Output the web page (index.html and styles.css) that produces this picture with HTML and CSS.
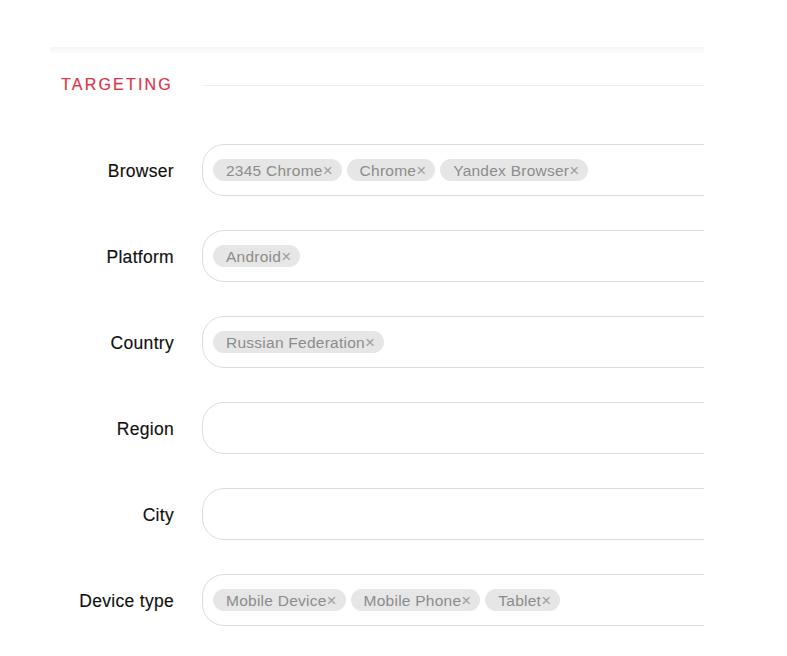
FILE: index.html
```html
<!DOCTYPE html>
<html>
<head>
<meta charset="utf-8">
<link rel="stylesheet" href="styles.css">
</head>
<body>
<div class="panel">
  <div class="topband"></div>
  <div class="section-head">
    <span class="section-title">TARGETING</span>
    <span class="section-rule"></span>
  </div>
  <div class="rows">
    <div class="row">
      <label class="label">Browser</label>
      <div class="field">
        <span class="tag">2345 Chrome<span class="x">×</span></span>
        <span class="tag">Chrome<span class="x">×</span></span>
        <span class="tag">Yandex Browser<span class="x">×</span></span>
      </div>
    </div>
    <div class="row">
      <label class="label">Platform</label>
      <div class="field">
        <span class="tag">Android<span class="x">×</span></span>
      </div>
    </div>
    <div class="row">
      <label class="label">Country</label>
      <div class="field">
        <span class="tag">Russian Federation<span class="x">×</span></span>
      </div>
    </div>
    <div class="row">
      <label class="label">Region</label>
      <div class="field"></div>
    </div>
    <div class="row">
      <label class="label">City</label>
      <div class="field"></div>
    </div>
    <div class="row">
      <label class="label">Device type</label>
      <div class="field">
        <span class="tag">Mobile Device<span class="x">×</span></span>
        <span class="tag">Mobile Phone<span class="x">×</span></span>
        <span class="tag">Tablet<span class="x">×</span></span>
      </div>
    </div>
  </div>
</div>
</body>
</html>
```

FILE: styles.css
```css
html, body {
  margin: 0;
  padding: 0;
  background: #ffffff;
}
body {
  font-family: "Liberation Sans", Arial, sans-serif;
  width: 787px;
  height: 656px;
  overflow: hidden;
}
.panel {
  margin-left: 50px;
  margin-top: 47px;
  width: 654px;
  overflow: hidden;
}
.topband {
  height: 6px;
  background: linear-gradient(#f5f5f5, #fbfbfb);
}
.section-head {
  display: flex;
  align-items: center;
  height: 20px;
  margin-top: 22px;
  padding-left: 11px;
}
.section-title {
  color: #de3348;
  font-size: 16px;
  letter-spacing: 2.2px;
  width: 141px;
  flex: none;
  -webkit-text-stroke: 0.2px #de3348;
}
.section-rule {
  flex: 1;
  height: 1px;
  background: #efefef;
}
.rows {
  display: flex;
  flex-direction: column;
  gap: 34px;
  margin-top: 49px;
}
.row {
  display: flex;
  align-items: center;
  gap: 28px;
}
.label {
  width: 124px;
  flex: none;
  text-align: right;
  font-size: 17.5px;
  color: #111;
  letter-spacing: 0.3px;
  -webkit-text-stroke: 0.15px #111;
  padding-top: 3px;
}
.field {
  flex: none;
  width: 560px;
  height: 50px;
  border: 1px solid #dcdcdc;
  border-radius: 22px;
  box-sizing: content-box;
  display: flex;
  align-items: center;
  gap: 5px;
  padding-left: 10px;
}
.tag {
  display: inline-flex;
  align-items: center;
  box-sizing: border-box;
  height: 22px;
  border-radius: 11px;
  background: #e6e6e6;
  color: #8c8c8c;
  font-size: 15.5px;
  letter-spacing: 0.25px;
  padding: 2px 9px 0 13px;
  white-space: nowrap;
}
.x {
  color: #a0a0a0;
  font-size: 17px;
  letter-spacing: 0;
}
```
